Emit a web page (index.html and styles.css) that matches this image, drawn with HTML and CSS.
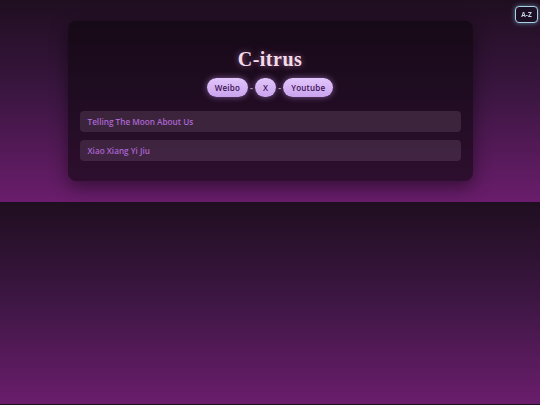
FILE: index.html
```html
<!DOCTYPE html>
<html lang="en">
<head>
<meta charset="utf-8">
<title>C-itrus</title>
<link rel="stylesheet" href="styles.css">
</head>
<body>
<button class="sort-btn">A-Z</button>
<main class="card">
  <h1 class="title">C-itrus</h1>
  <nav class="links">
    <a class="pill" href="#">Weibo</a>
    <span class="sep">-</span>
    <a class="pill" href="#">X</a>
    <span class="sep">-</span>
    <a class="pill" href="#">Youtube</a>
  </nav>
  <ul class="songs">
    <li class="song">Telling The Moon About Us</li>
    <li class="song">Xiao Xiang Yi Jiu</li>
  </ul>
</main>
</body>
</html>
```
FILE: styles.css
```css
html {
  margin: 0;
}
body {
  margin: 0;
  padding: 21px 0;
  background: linear-gradient(to bottom, #1f0e20 0%, #3a1640 45%, #6a1d6c 100%);
  font-family: "Open Sans", "DejaVu Sans", sans-serif;
}
.card {
  width: 405px;
  height: 160px;
  box-sizing: border-box;
  margin: 0 auto;
  padding: 26px 12px 20px;
  background: rgba(14, 7, 15, 0.62);
  border-radius: 8px;
  box-shadow: 0 6px 18px rgba(0, 0, 0, 0.45);
}
.title {
  margin: 0;
  font-family: "Liberation Serif", "DejaVu Serif", serif;
  font-weight: bold;
  font-size: 20px;
  line-height: 24px;
  text-align: center;
  color: #f3dcea;
  letter-spacing: 0.5px;
  text-shadow: 0 0 6px rgba(240, 150, 210, 0.55);
}
.links {
  margin-top: 7px;
  display: flex;
  justify-content: center;
  align-items: center;
  gap: 2px;
}
.pill {
  height: 19px;
  box-sizing: border-box;
  padding: 0 8px;
  display: flex;
  align-items: center;
  border-radius: 10px;
  background: linear-gradient(to bottom, #e2c6fb, #caa3ee);
  color: #3b1252;
  font-size: 8px;
  font-weight: 600;
  letter-spacing: 0.2px;
  text-decoration: none;
  box-shadow: 0 0 6px rgba(200, 150, 240, 0.55);
}
.sep {
  color: #a898aa;
  font-size: 9px;
  font-weight: 700;
  width: 3px;
  text-align: center;
}
.songs {
  list-style: none;
  margin: 14px 0 0;
  padding: 0;
  display: flex;
  flex-direction: column;
  gap: 8px;
}
.song {
  height: 21px;
  box-sizing: border-box;
  padding: 0 8px;
  display: flex;
  align-items: center;
  border-radius: 4px;
  background: rgba(255, 225, 255, 0.11);
  color: #ad66d2;
  font-size: 8.2px;
  font-weight: 600;
}
.sort-btn {
  position: fixed;
  top: 6px;
  right: 2px;
  width: 23px;
  height: 17px;
  padding: 0;
  border: 1.5px solid #a9d2e6;
  border-radius: 4px;
  background: #1d0f24;
  color: #c9d6e6;
  font-family: "Open Sans", "DejaVu Sans", sans-serif;
  font-size: 6.5px;
  font-weight: 700;
  box-shadow: 0 0 5px rgba(130, 200, 235, 0.6);
}
```
